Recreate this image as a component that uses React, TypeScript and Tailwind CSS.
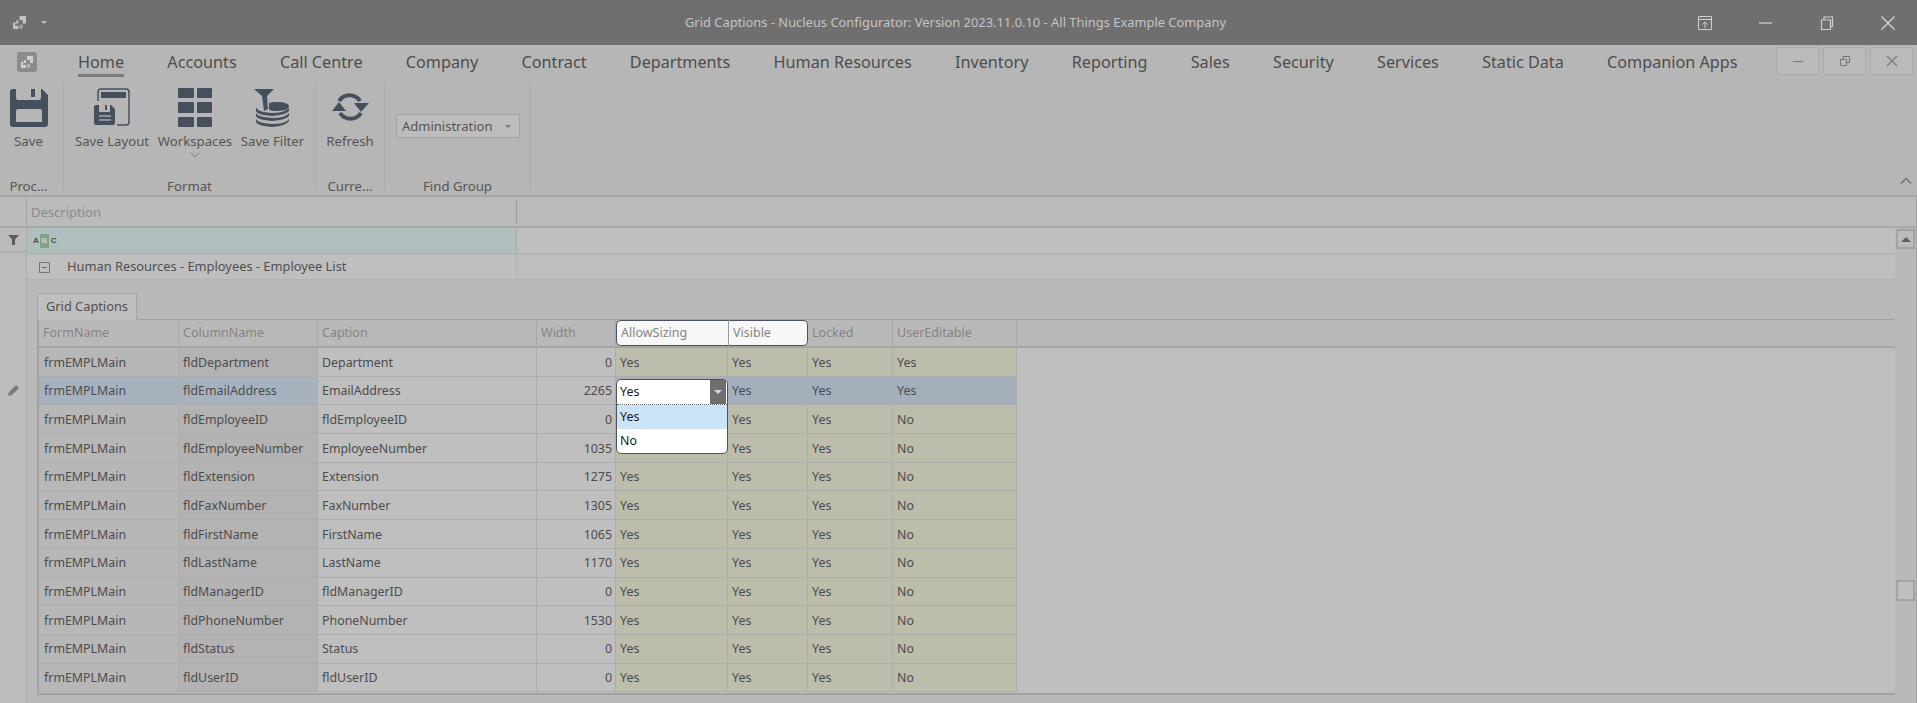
import React from "react";

const ribbonTabs = ["Home", "Accounts", "Call Centre", "Company", "Contract", "Departments", "Human Resources", "Inventory", "Reporting", "Sales", "Security", "Services", "Static Data", "Companion Apps"];

const rows = [
  ["fldDepartment", "Department", "0", "Yes"],
  ["fldEmailAddress", "EmailAddress", "2265", "Yes"],
  ["fldEmployeeID", "fldEmployeeID", "0", "No"],
  ["fldEmployeeNumber", "EmployeeNumber", "1035", "No"],
  ["fldExtension", "Extension", "1275", "No"],
  ["fldFaxNumber", "FaxNumber", "1305", "No"],
  ["fldFirstName", "FirstName", "1065", "No"],
  ["fldLastName", "LastName", "1170", "No"],
  ["fldManagerID", "fldManagerID", "0", "No"],
  ["fldPhoneNumber", "PhoneNumber", "1530", "No"],
  ["fldStatus", "Status", "0", "No"],
  ["fldUserID", "fldUserID", "0", "No"],
];

const gridCols = "grid grid-cols-[140px_139px_219px_79px_112px_80px_85px_124px]";

const LogoIcon = ({ color, size }: { color: string; size: number }) => (
  <svg width={size} height={size} viewBox="0 0 14 14" fill={color}>
    <path d="M7 1h6v7H10V5H7z" />
    <path d="M1 7h3V5h2v3H3v2h3v3H1z" />
    <path d="M7 9h3v4H7z" opacity="0.6" />
  </svg>
);

const SaveIcon = () => (
  <svg width="38" height="38" viewBox="0 0 38 38" fill="#46505c">
    <path fillRule="evenodd" d="M3 0h3v9q0 2 2 2h21q2 0 2-2V0h1l6 6v29q0 3-3 3H3q-3 0-3-3V3q0-3 3-3zM8 20q-2 0-2 2v11h26V22q0-2-2-2z" />
    <path d="M21 0h4v8h-4z" />
  </svg>
);

const SaveLayoutIcon = () => (
  <svg width="36" height="39" viewBox="0 0 36 39" fill="#46505c">
    <path d="M4 13V4q0-3 3-3h25q3 0 3 3v30q0 3-3 3h-9" fill="none" stroke="#46505c" strokeWidth="1.5" />
    <path d="M7 4h25v6H7z" />
    <path fillRule="evenodd" d="M2 17h3v6q0 1 1 1h9q1 0 1-1v-6h1l4 4v14q0 2-2 2H2q-2 0-2-2V19q0-2 2-2z" />
    <path d="M11 17h2v5h-2z" />
    <path d="M5 27h12v2H5zM5 31h12v2H5z" fill="#8c939b" />
  </svg>
);

const WorkspacesIcon = () => (
  <div className="grid grid-cols-2 gap-x-[3px] gap-y-[4px] w-[34px]">
    {[0, 1, 2, 3, 4, 5].map((i) => (
      <div key={i} className="h-[10.5px] bg-[#46505c] rounded-[1px]" />
    ))}
  </div>
);

const SaveFilterIcon = () => (
  <svg width="37" height="38" viewBox="0 0 37 38" fill="#46505c">
    <path d="M0 0h20l-7 7 1 13-4 2-2-15z" />
    <path d="M15 14q3-1 8-1 12 0 12 4.500 0 4-12 4.500-5 0-8-1z" />
    <path d="M2 18q1 4 8 5l7 1q14 0 18-5v3q-3 4-17 5-15-1-16-5z" />
    <path d="M2 24q1 4 16 5 14 0 17-5v3q-3 4-17 5-15-1-16-5z" />
    <path d="M2 30q1 4 16 5 14 0 17-5v2q-3 5-17 6-15-1-16-5z" />
  </svg>
);

const RefreshIcon = () => (
  <svg width="37" height="31" viewBox="0 0 37 31" fill="none">
    <path d="M7 9A12.500 12.500 0 0 1 28 9" stroke="#46505c" strokeWidth="4" />
    <path d="M22 11h15l-8 9z" fill="#46505c" />
    <path d="M29 21A12.500 12.500 0 0 1 8 21" stroke="#46505c" strokeWidth="4" />
    <path d="M0 19h14L7 10z" fill="#46505c" />
  </svg>
);

const RibbonButton = ({ icon, label, width }: { icon: React.ReactNode; label: string; width: string }) => (
  <div className={`flex flex-col items-center ${width}`}>
    <div className="h-[39px] flex items-center justify-center">{icon}</div>
    <div className="mt-[5px] whitespace-nowrap text-[13.2px] leading-[18px] text-[#555]">{label}</div>
  </div>
);

const RibbonGroup = ({ label, width, labelClass = "", children }: { label: string; width: string; labelClass?: string; children: React.ReactNode }) => (
  <div className={`flex flex-col h-[107px] border-r border-[#a9a9a9] ${width}`}>
    <div className="flex-1 min-h-0">{children}</div>
    <div className={`text-center text-[13.2px] leading-[18px] -mb-[5px] text-[#555] ${labelClass}`}>{label}</div>
  </div>
);

const WindowButton = ({ children }: { children: React.ReactNode }) => (
  <div className="w-[43px] h-[28px] flex items-center justify-center bg-[#bababa] border border-[#acacac] rounded-[2px]">{children}</div>
);

const HeaderCell = ({ label, className = "" }: { label: string; className?: string }) => (
  <div className={`flex items-center pl-[4px] pt-[1px] text-[12.5px] text-[#848484] ${className}`}>{label}</div>
);

const sep = "border-r border-[#a8a8a8]";

const App = () => {
  return (
    <div className="h-[703px] w-[1917px] overflow-hidden flex flex-col bg-[#b6b6b6] font-['Noto_Sans',sans-serif]">
      {/* Title bar */}
      <div className="h-[45px] shrink-0 bg-[#6f6f6f] flex items-center">
        <div className="flex-1 flex items-center">
          <div className="ml-[12px]"><LogoIcon color="#c4c4c4" size={15} /></div>
          <div className="ml-[14px] w-0 h-0 border-x-[3px] border-x-transparent border-t-[3px] border-t-[#bdbdbd]" />
        </div>
        <div className="text-center text-[12.9px] text-[#c4c4c4] ml-[15px] whitespace-nowrap">Grid Captions - Nucleus Configurator: Version 2023.11.0.10 - All Things Example Company</div>
        <div className="flex-1 flex items-center justify-end gap-[45px] pr-[21px]">
          <svg width="16" height="16" viewBox="0 0 16 16" fill="none" stroke="#cfcfcf">
            <path d="M1.500 1.500h13v13h-13zM1.500 4.500h13M8 13V7M5.500 9.500L8 7l2.500 2.500" />
          </svg>
          <svg width="16" height="16" viewBox="0 0 16 16" stroke="#cfcfcf" strokeWidth="1.3"><path d="M1 8h13" /></svg>
          <svg width="16" height="16" viewBox="0 0 16 16" fill="none" stroke="#cfcfcf" strokeWidth="1.2">
            <path d="M2.500 5h9v9.500h-9zM5 5V2h8.500v9.500H11.500" />
          </svg>
          <svg width="16" height="16" viewBox="0 0 16 16" stroke="#d4d4d4" strokeWidth="1.3"><path d="M1.500 1.500l13 13M14.500 1.500l-13 13" /></svg>
        </div>
      </div>

      {/* Ribbon tabs */}
      <div className="h-[38px] shrink-0 flex items-start">
        <div className="ml-[17px] mt-[7px] w-[20px] h-[20px] rounded-[3px] bg-[#8b8b8b] flex items-center justify-center">
          <LogoIcon color="#d0d0d0" size={14} />
        </div>
        <div className="ml-[41px] flex gap-[43.3px]">
          {ribbonTabs.map((t, i) => (
            <div key={t} className={`h-[32px] pt-[6px] flex items-center whitespace-nowrap text-[16.2px] text-[#4d4d4d] border-b-[3px] ${i === 0 ? "border-[#7c7c7c]" : "border-transparent"}`}>
              {t}
            </div>
          ))}
        </div>
        <div className="ml-auto mt-[2px] mr-[4px] flex gap-[4px]">
          <WindowButton>
            <svg width="12" height="12" viewBox="0 0 12 12" stroke="#777"><path d="M1 6.500h10" /></svg>
          </WindowButton>
          <WindowButton>
            <svg width="12" height="12" viewBox="0 0 12 12" fill="none" stroke="#777"><path d="M1.500 4.500h6v6h-6zM4 4.500v-3h6.500v6h-3" /></svg>
          </WindowButton>
          <WindowButton>
            <svg width="12" height="12" viewBox="0 0 12 12" stroke="#777" strokeWidth="1.1"><path d="M1 1l10 10M11 1L1 11" /></svg>
          </WindowButton>
        </div>
      </div>

      {/* Ribbon groups */}
      <div className="h-[114px] shrink-0 relative flex items-start border-b-[2px] border-[#a6a6a6]">
        <RibbonGroup label="Proc..." width="w-[64px]" labelClass="pr-[6px]">
          <div className="pt-[5px] pr-[6px] flex justify-center"><RibbonButton icon={<SaveIcon />} label="Save" width="w-[56px]" /></div>
        </RibbonGroup>
        <RibbonGroup label="Format" width="w-[252px]">
          <div className="pt-[5px] flex pl-[9px]">
            <RibbonButton icon={<SaveLayoutIcon />} label="Save Layout" width="w-[78px]" />
            <div className="ml-[7px]">
              <RibbonButton icon={<WorkspacesIcon />} label="Workspaces" width="w-[74px]" />
              <svg className="mx-auto mt-[2px]" width="10" height="7" viewBox="0 0 10 7" fill="none" stroke="#777"><path d="M1 1l4 4 4-4" /></svg>
            </div>
            <div className="ml-[8px]"><RibbonButton icon={<SaveFilterIcon />} label="Save Filter" width="w-[65px]" /></div>
          </div>
        </RibbonGroup>
        <RibbonGroup label="Curre..." width="w-[69px]">
          <div className="pt-[5px] flex justify-center"><RibbonButton icon={<RefreshIcon />} label="Refresh" width="w-[56px]" /></div>
        </RibbonGroup>
        <RibbonGroup label="Find Group" width="w-[146px]">
          <div className="mt-[31px] ml-[11px] w-[124px] h-[24px] bg-[#bdbdbd] border border-[#a2a2a2] flex items-center justify-between px-[5px] pt-[1px] text-[13px] text-[#555]">
            Administration
            <div className="w-0 h-0 border-x-[3px] border-x-transparent border-t-[3px] border-t-[#777] mr-[3px]" />
          </div>
        </RibbonGroup>
        <svg className="absolute right-[5px] bottom-[10px]" width="12" height="8" viewBox="0 0 12 8" fill="none" stroke="#707070" strokeWidth="1.4"><path d="M1 6.500l5-5 5 5" /></svg>
      </div>

      {/* Main grid header */}
      <div className="h-[31px] shrink-0 flex bg-[#bbbbbb] border-b-[2px] border-[#a8a8a8] border-r border-r-[#a0a0a0]">
        <div className="w-[27px] border-r border-[#a6a6a6]" />
        <div className="w-[490px] flex items-center pl-[4px] pt-[1px] text-[13px] text-[#8b8b8b] border-r border-[#9a9a9a] mt-[4px] mb-[3px]">Description</div>
      </div>

      {/* Body */}
      <div className="flex-1 min-h-0 flex border-r border-[#a0a0a0]">
        <div className="w-[27px] shrink-0 border-r border-[#acacac] flex flex-col items-center bg-[#bdbdbd]">
          <div className="h-[25px] w-full flex items-center justify-center border-b-[2px] border-[#b0b0b0] bg-[#bbbbbb]">
            <svg width="11" height="10" viewBox="0 0 11 10" fill="#5c5c5c"><path d="M0 0h11L7 4.500V10H4V4.500z" /></svg>
          </div>
          <div className="mt-[132px]">
            <svg width="11" height="11" viewBox="0 0 11 11" fill="#7d7d7d"><path d="M8 0l3 3-7 7-4 1 1-4z" /></svg>
          </div>
        </div>

        <div className="flex-1 min-w-0 flex flex-col">
          <div className="h-[25px] shrink-0 flex bg-[#bfbfbf] pr-[21px]">
            <div className="w-[490px] h-full bg-[#aebfbd] border-r border-[#a8a8a8] flex items-center pl-[6px]">
              <div className="flex items-center text-[8px] font-bold leading-[14px] text-[#4a4a4a] font-['Liberation_Sans',sans-serif]">
                <span>A</span>
                <span className="w-[9px] text-center bg-[#7fa384] ml-[1px] text-[#c4d2c6]">B</span>
                <span className="ml-[2px]">C</span>
              </div>
            </div>
          </div>
          <div className="h-[27px] shrink-0 flex mr-[21px] bg-[#bfbfbf] border-t-[2px] border-[#b4b4b4] border-b border-b-[#b2b2b2]">
            <div className="w-[490px] h-full border-r border-[#b0b0b0] flex items-center pl-[12px] text-[12.85px] text-[#4f4f4f]">
              <div className="w-[11px] h-[11px] border border-[#777] flex items-center justify-center mr-[17px]">
                <div className="w-[5px] h-px bg-[#666]" />
              </div>
              Human Resources - Employees - Employee List
            </div>
          </div>

          {/* Detail view */}
          <div className="flex-1 min-h-0 flex bg-[#b9b9b9] pl-[10px] pt-[13px] pr-[11px]">
            <div className="flex-1 min-w-0 flex flex-col">
              <div className="w-[100px] h-[27px] -mb-px z-10 bg-[#bfbfbf] border border-b-0 border-[#a5a5a5] flex items-center justify-center text-[12.8px] text-[#505050]">Grid Captions</div>
              <div className="h-[376px] border-2 border-[#a2a2a2] border-t bg-[#bfbfbf]">
                <div className={`${gridCols} h-[28px] bg-[#b9b9b9] border-b-[2px] border-[#a5a5a5]`}>
                  <HeaderCell label="FormName" className={sep} />
                  <HeaderCell label="ColumnName" className={sep} />
                  <HeaderCell label="Caption" className={sep} />
                  <HeaderCell label="Width" className={sep} />
                  <HeaderCell label="AllowSizing" className="bg-[#f7f7f7] border border-r-0 border-[#4a5460] rounded-l-[5px] text-[#777]" />
                  <HeaderCell label="Visible" className="bg-[#f7f7f7] border border-l-[#9a9a9a] border-[#4a5460] rounded-r-[5px] text-[#777]" />
                  <HeaderCell label="Locked" className={sep} />
                  <HeaderCell label="UserEditable" className={sep} />
                </div>
                {rows.map((r, i) => {
                  const selected = i === 1;
                  const covered = i >= 1 && i <= 3;
                  const yellow = selected ? "bg-[#a3b0bb]" : "bg-[#bdbdac]";
                  const cell = "flex items-center pl-[4px] pt-[2px] text-[12.4px] text-[#4c4c4c] border-r border-b border-[#adadad]";
                  return (
                    <div key={r[0]} className={`${gridCols} h-[28.7px]`}>
                      <div className={`${cell} pl-[5px] ${selected ? "bg-[#a6b3bf]" : "bg-[#b7b7b7]"}`}>frmEMPLMain</div>
                      <div className={`${cell} ${selected ? "bg-[#a6b3bf]" : "bg-[#b3b3b3]"}`}>{r[0]}</div>
                      <div className={`${cell} bg-[#bfbfbf]`}>{r[1]}</div>
                      <div className={`${cell} justify-end pr-[3px] bg-[#bfbfbf]`}>{r[2]}</div>
                      <div className={`${cell} ${yellow} relative`}>
                        {!covered && "Yes"}
                        {selected && (
                          <div className="absolute left-0 top-[2px] w-[112px] h-[75px] z-20 bg-white border border-[#4a5460] rounded-[5px] overflow-hidden text-[#1a1a1a]">
                            <div className="h-[25px] flex items-center pl-[3px] pt-[1px] border-b border-dotted border-[#666] relative">
                              Yes
                              <div className="absolute right-[1px] top-0 w-[16px] h-[24px] bg-[#6e6e6e] flex items-center justify-center">
                                <div className="w-0 h-0 border-x-[4px] border-x-transparent border-t-[4px] border-t-[#d8d8d8]" />
                              </div>
                            </div>
                            <div className="h-[24px] flex items-center pl-[3px] pt-[1px] bg-[#cce4f7]">Yes</div>
                            <div className="h-[24px] flex items-center pl-[3px] pt-[2px]">No</div>
                          </div>
                        )}
                      </div>
                      <div className={`${cell} ${yellow}`}>Yes</div>
                      <div className={`${cell} ${yellow}`}>Yes</div>
                      <div className={`${cell} ${yellow}`}>{r[3]}</div>
                    </div>
                  );
                })}
              </div>
            </div>
          </div>
        </div>

        {/* Scrollbar */}
        <div className="w-[21px] shrink-0 -ml-[21px] relative z-10 pt-[1px] bg-[#b9b9b9] flex flex-col items-center">
          <div className="w-[19px] h-[20px] border-2 border-[#a3a3a3] bg-[#bcbcbc] flex items-center justify-center">
            <div className="w-0 h-0 border-x-[5px] border-x-transparent border-b-[5px] border-b-[#5f5f5f]" />
          </div>
          <div className="mt-[331px] w-[19px] h-[21px] border-2 border-[#a3a3a3] bg-[#bfbfbf]" />
        </div>
      </div>
    </div>
  );
};

export default App;
